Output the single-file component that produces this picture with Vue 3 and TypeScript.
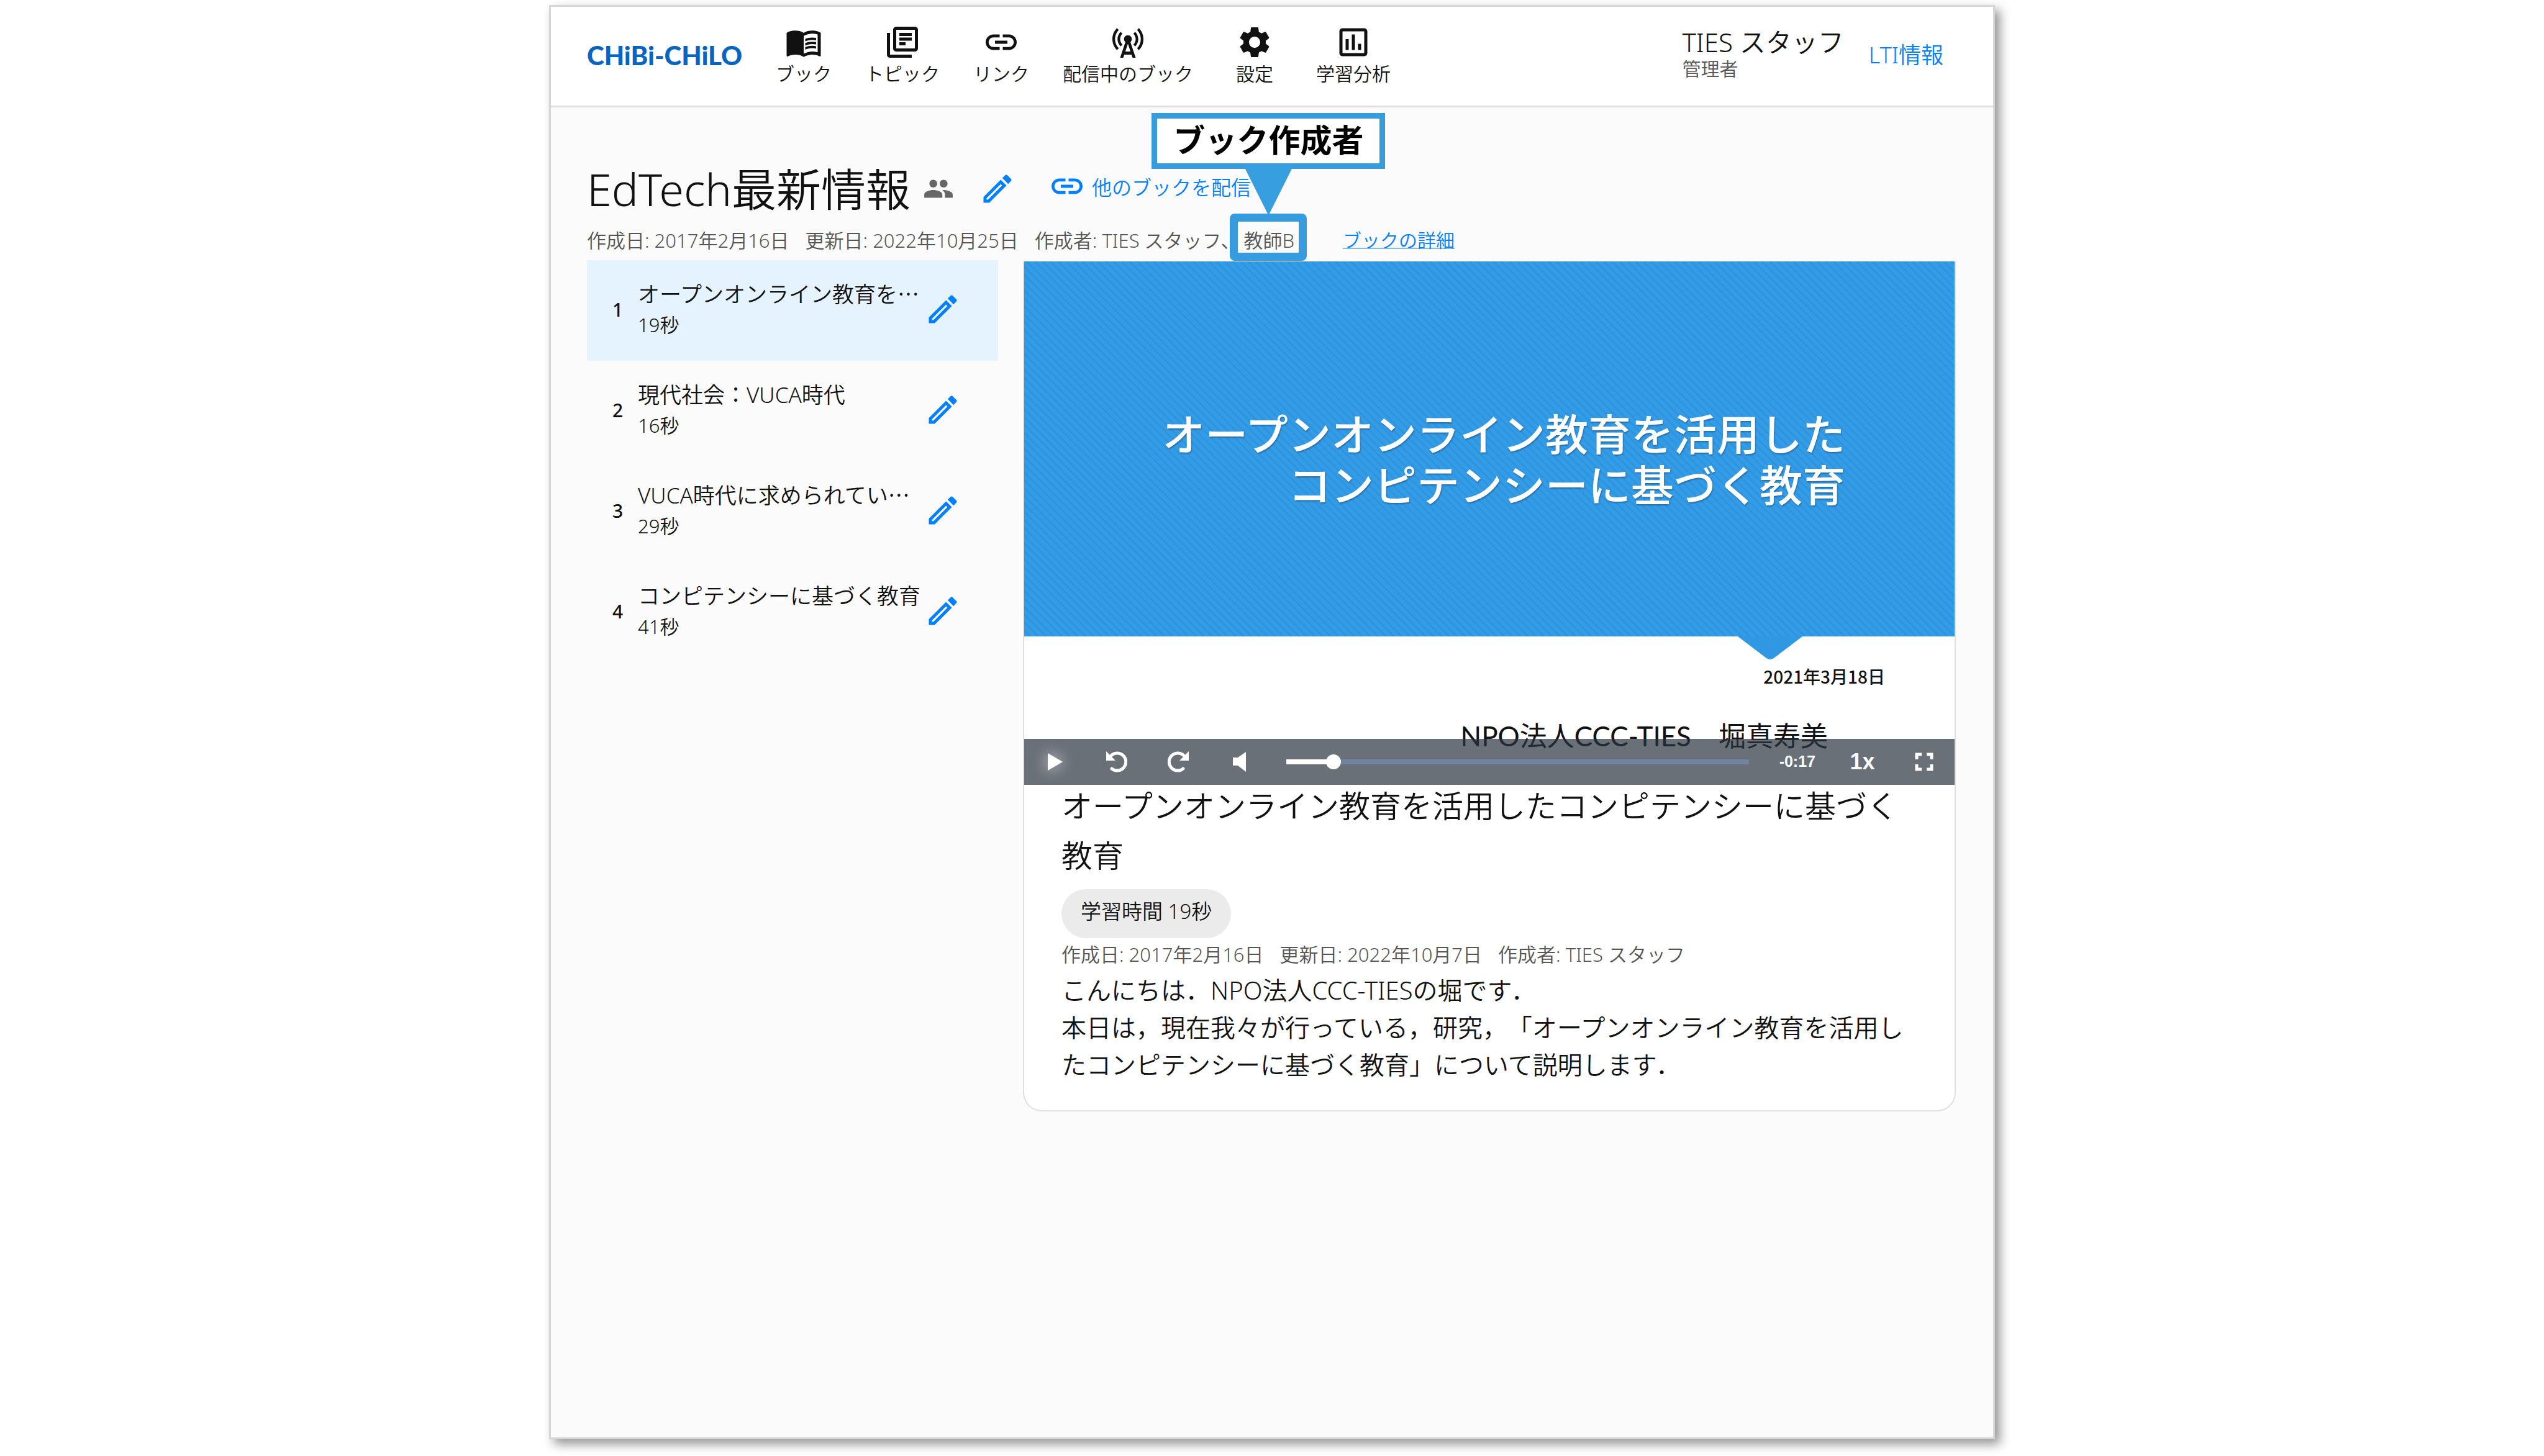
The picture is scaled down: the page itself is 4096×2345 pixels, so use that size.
<script setup lang="ts">
import { computed, ref } from 'vue'

interface NavItem {
  label: string
  path: string
}

interface Topic {
  title: string
  truncated: boolean
  duration: string
}

const icons = {
  book: 'M21 5c-1.11-.35-2.33-.5-3.5-.5-1.95 0-4.05.4-5.5 1.5-1.45-1.1-3.55-1.5-5.5-1.5S2.45 4.9 1 6v14.65c0 .25.25.5.5.5.1 0 .15-.05.25-.05C3.1 20.45 5.05 20 6.5 20c1.95 0 4.05.4 5.5 1.5 1.35-.85 3.8-1.5 5.5-1.5 1.65 0 3.35.3 4.75 1.05.1.05.15.05.25.05.25 0 .5-.25.5-.5V6c-.6-.45-1.25-.75-2-1zm0 13.5c-1.1-.35-2.3-.5-3.5-.5-1.7 0-4.15.65-5.5 1.5V8c1.35-.85 3.8-1.5 5.5-1.5 1.2 0 2.4.15 3.5.5v11.5zM17.5 10.5c.88 0 1.73.09 2.5.26V9.24c-.79-.15-1.64-.24-2.5-.24-1.7 0-3.24.29-4.5.83v1.66c1.13-.64 2.7-.99 4.5-.99zM13 12.49v1.66c1.13-.64 2.7-.99 4.5-.99.88 0 1.73.09 2.5.26V11.9c-.79-.15-1.64-.24-2.5-.24-1.7 0-3.24.3-4.5.83zm4.5 1.84c-1.7 0-3.24.29-4.5.83v1.66c1.13-.64 2.7-.99 4.5-.99.88 0 1.73.09 2.5.26v-1.52c-.79-.16-1.64-.24-2.5-.24z',
  topic:
    'M4 6H2v14c0 1.1.9 2 2 2h14v-2H4V6zm16-4H8c-1.1 0-2 .9-2 2v12c0 1.1.9 2 2 2h12c1.1 0 2-.9 2-2V4c0-1.1-.9-2-2-2zm0 14H8V4h12v12zM10 9h8v2h-8V9zm0 3h4v2h-4v-2zm0-6h8v2h-8V6z',
  link: 'M3.9 12c0-1.71 1.39-3.1 3.1-3.1h4V7H7c-2.76 0-5 2.24-5 5s2.24 5 5 5h4v-1.9H7c-1.71 0-3.1-1.39-3.1-3.1zM8 13h8v-2H8v2zm9-6h-4v1.9h4c1.71 0 3.1 1.39 3.1 3.1s-1.39 3.1-3.1 3.1h-4V17h4c2.76 0 5-2.24 5-5s-2.24-5-5-5z',
  tower:
    'M7.3 14.7l1.2-1.2c-1-1-1.5-2.3-1.5-3.5 0-1.3.5-2.6 1.5-3.5L7.3 5.3c-1.3 1.3-2 3-2 4.7s.7 3.4 2 4.7zM19.1 2.9l-1.2 1.2c1.6 1.6 2.4 3.8 2.4 5.9 0 2.1-.8 4.3-2.4 5.9l1.2 1.2c2-2 2.9-4.5 2.9-7.1 0-2.6-1-5.1-2.9-7.1zM6.1 4.1L4.9 2.9C3 4.9 2 7.4 2 10c0 2.6 1 5.1 2.9 7.1l1.2-1.2c-1.6-1.6-2.4-3.8-2.4-5.9 0-2.1.8-4.3 2.4-5.9zM16.7 14.7c1.3-1.3 2-3 2-4.7-.1-1.7-.7-3.4-2-4.7l-1.2 1.2c1 1 1.5 2.3 1.5 3.5 0 1.3-.5 2.6-1.5 3.5l1.2 1.2zM14.5 10c0-1.38-1.12-2.5-2.5-2.5S9.5 8.62 9.5 10c0 .76.34 1.42.87 1.88L7 22h2l.67-2h4.67l.66 2h2l-3.37-10.12c.53-.46.87-1.12.87-1.88zm-4.17 8L12 13l1.67 5h-3.34z',
  settings:
    'M19.14 12.94c.04-.3.06-.61.06-.94 0-.32-.02-.64-.07-.94l2.03-1.58c.18-.14.23-.41.12-.61l-1.92-3.32c-.12-.22-.37-.29-.59-.22l-2.39.96c-.5-.38-1.03-.7-1.62-.94l-.36-2.54c-.04-.24-.24-.41-.48-.41h-3.84c-.24 0-.43.17-.47.41l-.36 2.54c-.59.24-1.13.57-1.62.94l-2.39-.96c-.22-.08-.47 0-.59.22L2.74 8.87c-.12.21-.08.47.12.61l2.03 1.58c-.05.3-.09.63-.09.94s.02.64.07.94l-2.03 1.58c-.18.14-.23.41-.12.61l1.92 3.32c.12.22.37.29.59.22l2.39-.96c.5.38 1.03.7 1.62.94l.36 2.54c.05.24.24.41.48.41h3.84c.24 0 .44-.17.47-.41l.36-2.54c.59-.24 1.13-.56 1.62-.94l2.39.96c.22.08.47 0 .59-.22l1.92-3.32c.12-.22.07-.47-.12-.61l-2.01-1.58zM12 15.6c-1.98 0-3.6-1.62-3.6-3.6s1.62-3.6 3.6-3.6 3.6 1.62 3.6 3.6-1.62 3.6-3.6 3.6z',
  chart:
    'M9 17H7v-7h2v7zm4 0h-2V7h2v10zm4 0h-2v-4h2v4zm2 2H5V5h14v14zm0-16H5c-1.1 0-2 .9-2 2v14c0 1.1.9 2 2 2h14c1.1 0 2-.9 2-2V5c0-1.1-.9-2-2-2z',
  people:
    'M16 11c1.66 0 2.99-1.34 2.99-3S17.66 5 16 5c-1.66 0-3 1.34-3 3s1.34 3 3 3zm-8 0c1.66 0 2.99-1.34 2.99-3S9.66 5 8 5C6.34 5 5 6.34 5 8s1.34 3 3 3zm0 2c-2.33 0-7 1.17-7 3.5V19h14v-2.5c0-2.33-4.67-3.5-7-3.5zm8 0c-.29 0-.62.02-.97.05 1.16.84 1.97 1.97 1.97 3.45V19h6v-2.5c0-2.33-4.67-3.5-7-3.5z',
  edit: 'M14.06 9.02l.92.92L5.92 19H5v-.92l9.06-9.06M17.66 3c-.25 0-.51.1-.7.29l-1.83 1.83 3.75 3.75 1.83-1.83c.39-.39.39-1.02 0-1.41l-2.34-2.34c-.2-.2-.45-.29-.71-.29zm-3.6 3.19L3 17.25V21h3.75L17.81 9.94l-3.75-3.75z',
}

const navItems: NavItem[] = [
  { label: 'ブック', path: icons.book },
  { label: 'トピック', path: icons.topic },
  { label: 'リンク', path: icons.link },
  { label: '配信中のブック', path: icons.tower },
  { label: '設定', path: icons.settings },
  { label: '学習分析', path: icons.chart },
]

const topics: Topic[] = [
  { title: 'オープンオンライン教育を', truncated: true, duration: '19秒' },
  { title: '現代社会：VUCA時代', truncated: false, duration: '16秒' },
  { title: 'VUCA時代に求められてい', truncated: true, duration: '29秒' },
  { title: 'コンピテンシーに基づく教育', truncated: false, duration: '41秒' },
]

const selected = ref(0)
const length = 19
const position = ref(1.7)
const played = computed(() => `${(position.value / length) * 100}%`)
</script>

<template>
  <div class="page" lang="ja">
    <div class="frame">
      <header class="header">
        <a class="logo" href="#">CHiBi-CHiLO</a>
        <nav class="nav">
          <a v-for="item in navItems" :key="item.label" class="nav-item" href="#">
            <svg class="icon" viewBox="0 0 24 24" aria-hidden="true"><path :d="item.path" /></svg>
            <span>{{ item.label }}</span>
          </a>
        </nav>
        <div class="user">
          <span class="user-name">TIES スタッフ</span>
          <span class="user-role">管理者</span>
        </div>
        <button class="lti" type="button">LTI情報</button>
      </header>

      <main class="body">
        <div class="title-row">
          <h1>EdTech最新情報</h1>
          <svg class="people" viewBox="0 0 24 24" aria-hidden="true"><path :d="icons.people" /></svg>
          <button class="icon-button" type="button" aria-label="ブックを編集">
            <svg class="icon" viewBox="0 0 24 24" aria-hidden="true"><path :d="icons.edit" /></svg>
          </button>
          <button class="deliver" type="button">
            <svg class="icon" viewBox="0 0 24 24" aria-hidden="true"><path :d="icons.link" /></svg>
            <span>他のブックを配信</span>
          </button>
        </div>

        <div class="meta book-meta">
          <span>作成日: 2017年2月16日</span>
          <span>更新日: 2022年10月25日</span>
          <span class="authors">
            <span>作成者: TIES スタッフ、</span>
            <span class="author">
              教師B
              <span class="marker"></span>
              <span class="callout">ブック作成者</span>
            </span>
          </span>
          <a class="detail" href="#">ブックの詳細</a>
        </div>

        <div class="columns">
          <ol class="topics">
            <li
              v-for="(topic, index) in topics"
              :key="topic.title"
              class="topic"
              :class="{ active: index === selected }"
              @click="selected = index"
            >
              <span class="number">{{ index + 1 }}</span>
              <div class="topic-text">
                <span class="topic-title">{{ topic.title }}<span v-if="topic.truncated" class="dots">…</span></span>
                <span class="topic-time">{{ topic.duration }}</span>
              </div>
              <button class="icon-button" type="button" aria-label="トピックを編集">
                <svg class="icon" viewBox="0 0 24 24" aria-hidden="true"><path :d="icons.edit" /></svg>
              </button>
            </li>
          </ol>

          <article class="card">
            <div class="video">
              <div class="slide-top">
                <p class="slide-title">オープンオンライン教育を活用した<br />コンピテンシーに基づく教育</p>
                <svg class="notch" viewBox="0 0 104 38" aria-hidden="true">
                  <path d="M0 0H104L58 35Q52 39 46 35Z" fill="#3097e3" />
                </svg>
              </div>
              <div class="slide-bottom">
                <p class="slide-date">2021年3月18日</p>
                <p class="slide-author">NPO法人CCC-TIES　堀真寿美</p>
              </div>
              <div class="controls">
                <button class="control play" type="button" aria-label="再生">
                  <svg width="24" height="28" viewBox="0 0 24 28"><path d="M0 0L24 14L0 28Z" fill="#fff" /></svg>
                </button>
                <button class="control" type="button" aria-label="戻る">
                  <svg width="34" height="34" viewBox="0 0 34 34">
                    <path d="M0 0V15H15Z" fill="#fff" />
                    <path d="M8 7A14 14 0 1 1 9 28" fill="none" stroke="#fff" stroke-width="5" stroke-linecap="round" />
                  </svg>
                </button>
                <button class="control" type="button" aria-label="進む">
                  <svg width="34" height="34" viewBox="0 0 34 34">
                    <path d="M34 0V15H19Z" fill="#fff" />
                    <path d="M26 7A14 14 0 1 0 25 28" fill="none" stroke="#fff" stroke-width="5" stroke-linecap="round" />
                  </svg>
                </button>
                <button class="control" type="button" aria-label="音量">
                  <svg width="21" height="32" viewBox="0 0 21 32"><path d="M0 9V22H8L21 32V0L8 9Z" fill="#fff" /></svg>
                </button>
                <input
                  v-model.number="position"
                  class="seek"
                  type="range"
                  min="0"
                  :max="length"
                  step="0.1"
                  aria-label="再生位置"
                  :style="{ '--played': played }"
                />
                <span class="remaining">-0:17</span>
                <button class="control rate" type="button">1x</button>
                <button class="control" type="button" aria-label="全画面">
                  <svg width="30" height="30" viewBox="0 0 30 30">
                    <path
                      d="M3 11V3H11M19 3H27V11M27 19V27H19M11 27H3V19"
                      fill="none"
                      stroke="#fff"
                      stroke-width="5"
                    />
                  </svg>
                </button>
              </div>
            </div>

            <div class="content">
              <h2>オープンオンライン教育を活用したコンピテンシーに基づく教育</h2>
              <span class="chip">学習時間 19秒</span>
              <div class="meta topic-meta">
                <span>作成日: 2017年2月16日</span>
                <span>更新日: 2022年10月7日</span>
                <span>作成者: TIES スタッフ</span>
              </div>
              <p class="description">
                こんにちは．NPO法人CCC-TIESの堀です．<br />本日は，現在我々が行っている，研究，「オープンオンライン教育を活用したコンピテンシーに基づく教育」について説明します．
              </p>
            </div>
          </article>
        </div>
      </main>
    </div>
  </div>
</template>

<style>
body {
  margin: 0;
  background: #fff;
}
</style>

<style scoped>
* {
  box-sizing: border-box;
}

.page {
  display: flex;
  flex-direction: column;
  min-height: 100vh;
  padding: 8px 884px 27px;
  font-family: 'Noto Sans', 'Noto Sans CJK JP', sans-serif;
  font-weight: 350;
  color: #111;
  text-spacing-trim: space-all;
}

.frame {
  flex: 1;
  display: flex;
  flex-direction: column;
  border: 3px solid #d6d6d6;
  background: #fbfbfb;
  box-shadow: 8px 8px 16px rgba(0, 0, 0, 0.42);
}

button {
  padding: 0;
  border: 0;
  background: none;
  font: inherit;
  color: #007fff;
  cursor: pointer;
}

a {
  color: inherit;
  text-decoration: none;
}

h1,
h2,
p,
ol {
  margin: 0;
  padding: 0;
  font-weight: inherit;
}

svg {
  display: block;
}

.icon {
  width: 60px;
  height: 60px;
  fill: currentColor;
}

.header {
  display: flex;
  align-items: center;
  height: 162px;
  padding: 0 60px 3px 58px;
  border-bottom: 3px solid #e0e0e0;
  background: #fff;
}

.logo {
  width: 250px;
  font-family: Lato, sans-serif;
  font-size: 42px;
  font-weight: 900;
  line-height: 60px;
  color: #0764c0;
  white-space: nowrap;
}

.nav {
  display: flex;
  gap: 54px;
  margin-left: 54px;
}

.nav-item {
  display: flex;
  flex-direction: column;
  align-items: center;
  min-width: 90px;
  font-size: 30px;
  line-height: 42px;
  white-space: nowrap;
}

.user {
  display: flex;
  flex-direction: column;
  margin-left: auto;
  line-height: 43px;
  white-space: nowrap;
}

.user-name {
  font-size: 42px;
}

.user-role {
  font-size: 30px;
  color: #555;
}

.lti {
  margin-left: 20px;
  padding: 0 20px;
  font-size: 36px;
  line-height: 56px;
  white-space: nowrap;
}

.body {
  padding: 89px 60px 60px 58px;
}

.title-row {
  display: flex;
  align-items: center;
  height: 84px;
  white-space: nowrap;
}

h1 {
  font-size: 72px;
  line-height: 84px;
}

.people {
  width: 50px;
  height: 50px;
  margin: 0 40px 0 20px;
  fill: #666;
}

.deliver {
  display: flex;
  align-items: center;
  gap: 10px;
  margin: 0 0 8px 52px;
  font-size: 32px;
}

.meta {
  display: flex;
  font-size: 31px;
  color: #555;
  white-space: nowrap;
}

.book-meta {
  gap: 26px;
  margin-top: 16px;
  line-height: 50px;
}

.authors {
  display: flex;
  gap: 6px;
}

.author {
  position: relative;
}

.marker {
  position: absolute;
  z-index: 2;
  top: -18px;
  left: -22px;
  width: 124px;
  height: 76px;
  border: 13px solid #379cdd;
  border-radius: 8px;
}

.callout {
  position: absolute;
  z-index: 3;
  top: -180px;
  left: -148px;
  width: 376px;
  height: 90px;
  border: 9px solid #379cdd;
  background: #fff;
  font-size: 51px;
  font-weight: 700;
  line-height: 68px;
  text-align: center;
  color: #000;
}

.callout::after {
  content: '';
  position: absolute;
  top: 100%;
  left: 50%;
  width: 84px;
  height: 84px;
  margin-left: -42px;
  background: #379fdf;
  clip-path: polygon(0 0, 100% 0, 50% 100%);
}

.detail {
  margin-left: 52px;
  font-size: 30px;
  color: #007fff;
  text-decoration: underline;
  text-decoration-color: #80bfff;
  text-decoration-thickness: 2px;
}

.columns {
  display: grid;
  grid-template-columns: 662px 1fr;
  gap: 40px;
  align-items: start;
  margin-top: 7px;
}

.topics {
  list-style: none;
}

.topic {
  display: flex;
  align-items: center;
  height: 162px;
  padding: 0 59px 4px 41px;
}

.topic.active {
  background: #e5f2ff;
}

.number {
  width: 41px;
  font-size: 30px;
  font-weight: 500;
}

.topic-text {
  flex: 1;
  display: flex;
  flex-direction: column;
  line-height: 50px;
  white-space: nowrap;
}

.topic-title {
  font-size: 35px;
}

.dots {
  font-family: 'Noto Sans CJK JP', sans-serif;
  line-height: 1;
}

.topic-time {
  font-size: 31px;
  line-height: 48px;
}

.card {
  margin-top: 2px;
  border: 2px solid #e0e0e0;
  border-top: 0;
  border-radius: 0 0 30px 30px;
  background: #fff;
}

.video {
  position: relative;
  display: flex;
  flex-direction: column;
  aspect-ratio: 16 / 9;
}

.slide-top {
  position: relative;
  display: flex;
  flex-direction: column;
  justify-content: center;
  flex: 0 0 604px;
  padding: 34px 176px 0 0;
  background: repeating-linear-gradient(45deg, #349be6 0, #349be6 5px, #2c91db 7px, #349be6 9px);
}

.slide-title {
  font-size: 69px;
  font-weight: 500;
  line-height: 82px;
  text-align: right;
  color: #fff;
  text-shadow: 1px 2px 2px rgba(30, 70, 110, 0.5);
}

.notch {
  position: absolute;
  top: 100%;
  right: 245px;
  width: 104px;
  height: 38px;
}

.slide-bottom {
  flex: 1;
  text-align: right;
  color: #111;
}

.slide-date {
  padding: 44px 112px 0 0;
  font-family: 'Noto Sans CJK JP', sans-serif;
  font-size: 28px;
  font-weight: 500;
  line-height: 40px;
}

.slide-author {
  padding: 46px 204px 0 0;
  font-family: Lato, 'Noto Sans CJK JP', sans-serif;
  font-size: 44px;
  font-weight: 400;
  line-height: 60px;
}

.controls {
  position: absolute;
  inset: auto 0 0;
  display: flex;
  align-items: center;
  height: 74px;
  background: rgba(43, 51, 63, 0.7);
  font-family: 'Liberation Sans', sans-serif;
  font-weight: 700;
  color: #fff;
}

.control {
  display: flex;
  flex: 0 0 99px;
  align-items: center;
  justify-content: center;
  height: 74px;
  color: #fff;
}

.play svg {
  overflow: visible;
  filter: drop-shadow(0 0 12px rgba(255, 255, 255, 0.8));
}

.seek {
  flex: 1;
  min-width: 0;
  height: 24px;
  margin: 0 49px 0 26px;
  appearance: none;
  background: linear-gradient(to right, #fff var(--played), #7083a0 var(--played)) center / 100% 8px no-repeat;
}

.seek::-webkit-slider-thumb {
  width: 24px;
  height: 24px;
  appearance: none;
  border-radius: 50%;
  background: #fff;
}

.remaining {
  margin-right: 26px;
  font-size: 25px;
}

.rate {
  font-size: 36px;
}

.content {
  padding: 0 60px 43px;
}

h2 {
  margin-top: -6px;
  font-size: 50px;
  line-height: 80px;
}

.chip {
  display: inline-block;
  height: 79px;
  margin-top: 14px;
  padding: 0 31px;
  border-radius: 40px;
  background: #ebebeb;
  font-size: 33px;
  line-height: 72px;
  vertical-align: top;
}

.topic-meta {
  gap: 26px;
  margin-bottom: 2px;
  line-height: 52px;
}

.description {
  font-size: 40px;
  line-height: 60px;
}
</style>
